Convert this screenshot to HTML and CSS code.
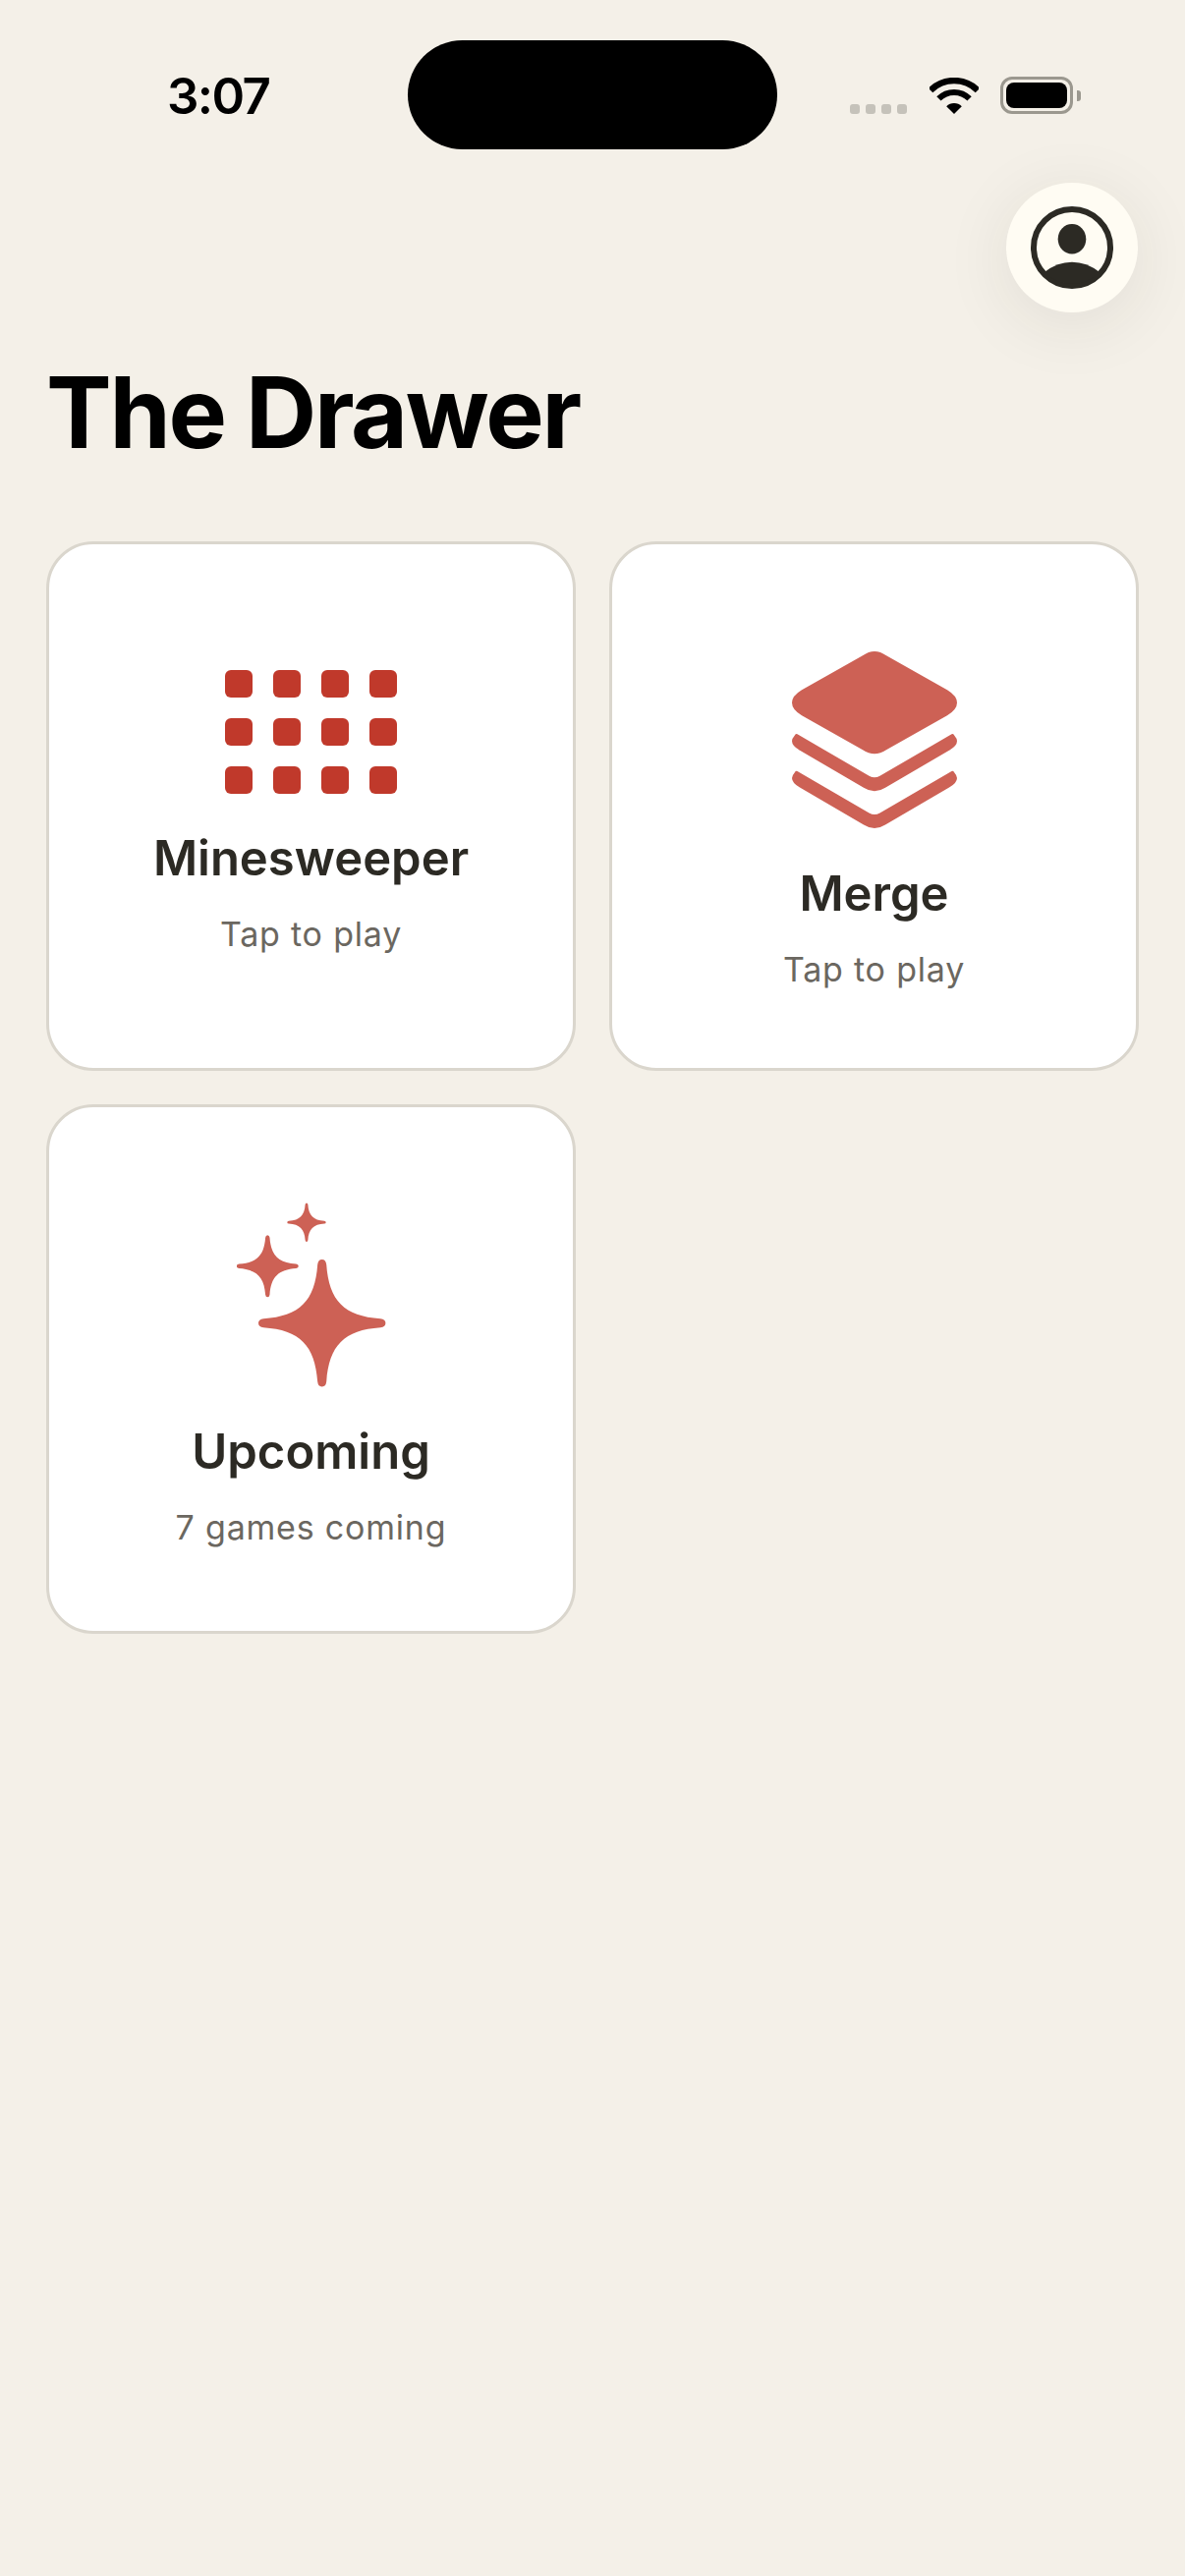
FILE: index.html
```html
<!DOCTYPE html>
<html lang="en">
<head>
  <meta charset="UTF-8" />
  <meta name="viewport" content="width=device-width, initial-scale=1.0"/>
  <title>The Drawer</title>
  <link rel="stylesheet" href="styles.css">
</head>
<body>

  <div class="status-bar">
    <div class="time">3:07</div>
    <div class="island"></div>
    <div class="status-icons">
      <div class="signal"><span></span><span></span><span></span><span></span></div>
      <svg class="wifi" width="50" height="37" viewBox="0 0 50 37">
        <path d="M1 13A34 34 0 0 1 49 13" fill="none" stroke="#000" stroke-width="6.5"/>
        <path d="M9.4 21.4A22 22 0 0 1 40.6 21.4" fill="none" stroke="#000" stroke-width="6"/>
        <path d="M25 37L17.2 29.2A11 11 0 0 1 32.8 29.2Z" fill="#000"/>
      </svg>
      <div class="battery"><div class="battery-level"></div></div>
      <div class="battery-nub"></div>
    </div>
  </div>

  <div class="top-row">
    <button class="profile-btn">
      <svg width="84" height="84" viewBox="0 0 84 84">
        <circle cx="42" cy="42" r="39" fill="none" stroke="#2c2a24" stroke-width="6"/>
        <ellipse cx="42" cy="33.3" rx="14.3" ry="15.3" fill="#2c2a24"/>
        <path d="M14 67Q27 56.7 42 56.7Q57 56.7 70 67A39 39 0 0 1 14 67Z" fill="#2c2a24"/>
      </svg>
    </button>
  </div>

  <h1>The Drawer</h1>

  <div class="game-grid">
    <div class="game-card">
      <div class="mine-grid">
        <span></span><span></span><span></span><span></span>
        <span></span><span></span><span></span><span></span>
        <span></span><span></span><span></span><span></span>
      </div>
      <div class="game-name">Minesweeper</div>
      <div class="game-sub">Tap to play</div>
    </div>

    <div class="game-card">
      <svg class="card-icon" width="168" height="198" viewBox="16 -4.3 168 198">
        <path d="M88 17Q100 8.5 112 17L174 52Q184 58 184 65Q184 72 174 78L112 113Q100 121 88 113L26 78Q16 72 16 65Q16 58 26 52Z"/>
        <g id="layer">
          <path d="M21.5 97L94.5 139.5Q100 142.5 105.5 139.5L178.5 97Q180 96 181 98Q184 101.5 184 104Q184 109 176 113.5L111 151.5Q100 158.5 89 151.5L24 113.5Q16 109 16 104Q16 101.5 19 98Q20 96 21.5 97Z"/>
        </g>
        <use href="#layer" y="37.7"/>
      </svg>
      <div class="game-name">Merge</div>
      <div class="game-sub">Tap to play</div>
    </div>

    <div class="game-card">
      <svg class="card-icon" width="152" height="188" viewBox="21 14.5 152 188">
        <defs>
          <path id="star" d="M-7 -92Q-6 -100 0 -100Q6 -100 7 -92C11 -35 35 -11 92 -7Q100 -6 100 0Q100 6 92 7C35 11 11 35 7 92Q6 100 0 100Q-6 100 -7 92C-11 35 -35 11 -92 7Q-100 6 -100 0Q-100 -6 -92 -7C-35 -11 -11 -35 -7 -92Z"/>
        </defs>
        <use href="#star" transform="translate(107.7 137.3) scale(.647)"/>
        <use href="#star" transform="translate(52.3 79.3) scale(.315)"/>
        <use href="#star" transform="translate(92 34.7) scale(.197)"/>
      </svg>
      <div class="game-name">Upcoming</div>
      <div class="game-sub">7 games coming</div>
    </div>
  </div>

</body>
</html>
```

FILE: styles.css
```css
* { margin: 0; padding: 0; box-sizing: border-box; }

body {
  font-family: 'Inter', sans-serif;
  background-color: #f4f0e8;
  color: #2c2a24;
  width: 1206px;
  height: 2622px;
  overflow: hidden;
}

/* Status bar */
.status-bar {
  display: grid;
  grid-template-columns: 415px 376px 1fr;
  padding-top: 41px;
}

.time {
  padding: 27px 0 0 170px;
  font-size: 51px;
  font-weight: 600;
  line-height: 60px;
  letter-spacing: -1.6px;
  color: #000;
}

.island {
  height: 111px;
  border-radius: 56px;
  background-color: #000;
}

.status-icons {
  display: flex;
  align-items: flex-end;
  align-self: flex-start;
  margin-top: 37px;
  padding-left: 74px;
}

.signal {
  display: flex;
  gap: 6px;
  margin-right: 23px;
}

.signal span {
  width: 10px;
  height: 10px;
  border-radius: 3px;
  background-color: #c5c2ba;
}

.wifi {
  margin-right: 22px;
}

.battery {
  width: 74px;
  height: 38px;
  padding: 3px;
  border: 3px solid #9b988f;
  border-radius: 12px;
}

.battery-level {
  height: 100%;
  border-radius: 8px;
  background-color: #000;
}

.battery-nub {
  width: 4px;
  height: 11px;
  margin: 0 0 13px 4px;
  border-radius: 0 3px 3px 0;
  background-color: #9b988f;
}

/* Profile */
.top-row {
  display: flex;
  justify-content: flex-end;
  padding: 34px 48px 0 0;
}

.profile-btn {
  display: flex;
  justify-content: center;
  align-items: center;
  width: 134px;
  height: 132px;
  border: none;
  border-radius: 50%;
  background-color: #fffcf3;
  box-shadow: 0 12px 70px rgba(44, 42, 36, 0.09);
}

h1 {
  padding: 40px 47px 0;
  font-size: 100px;
  font-weight: 700;
  line-height: 124px;
  letter-spacing: -2.3px;
  color: #000;
}

/* Cards */
.game-grid {
  display: grid;
  grid-template-columns: 1fr 1fr;
  gap: 34px;
  padding: 69px 47px 0;
}

.game-card {
  display: flex;
  flex-direction: column;
  align-items: center;
  justify-content: center;
  aspect-ratio: 1;
  padding-top: 14px;
  background-color: #fff;
  border: 3px solid #dad6cd;
  border-radius: 48px;
}

.mine-grid {
  display: grid;
  grid-template-columns: repeat(4, 28px);
  grid-auto-rows: 28px;
  gap: 21px;
}

.mine-grid span {
  border-radius: 6px;
  background-color: #c0392b;
}

.card-icon {
  display: block;
  fill: #cd6155;
}

.game-name {
  margin-top: 36px;
  font-size: 49px;
  font-weight: 600;
  line-height: 60px;
  color: #2c2a24;
}

.game-sub {
  margin-top: 25px;
  font-size: 34px;
  line-height: 44px;
  letter-spacing: 0.8px;
  color: #6b6760;
}
```
